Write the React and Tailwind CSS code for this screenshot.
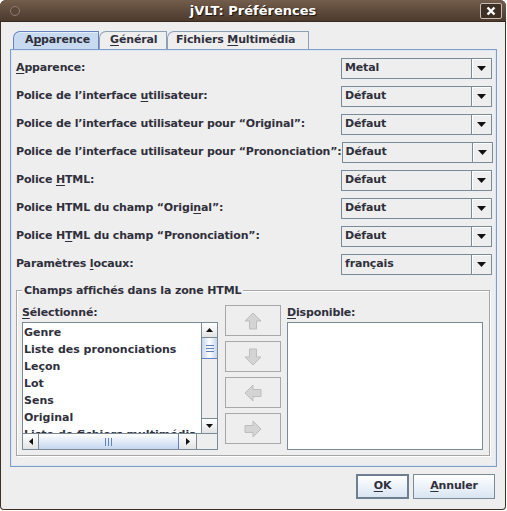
import React from 'react';

const U = ({ children }) => <span className="underline underline-offset-[2px]">{children}</span>;

const DownArrow = () => (
  <svg width="9" height="5" viewBox="0 0 9 5">
    <polygon points="0,0 9,0 4.5,5" fill="#111" />
  </svg>
);

const Combo = ({ value }) => (
  <div className="w-[151px] h-[21px] shrink-0 flex border border-[#7a8a99] bg-[#eeeeee]">
    <div className="flex-1 flex items-center pl-[3px] border-r border-[#7a8a99]">{value}</div>
    <div className="w-[19px] flex items-center justify-center shadow-[inset_1px_1px_0_#fff]">
      <DownArrow />
    </div>
  </div>
);

const rows = [
  { label: <><U>A</U>pparence:</>, value: 'Metal' },
  { label: <>Police de l’interface <U>u</U>tilisateur:</>, value: 'Défaut' },
  { label: <>Police de l’interface utilisateur pour “Original”:</>, value: 'Défaut' },
  { label: <>Police de l’interface utilisateur pour “Prononciation”:</>, value: 'Défaut' },
  { label: <>Police <U>H</U>TML:</>, value: 'Défaut' },
  { label: <>Police HTML du champ “Origi<U>n</U>al”:</>, value: 'Défaut' },
  { label: <>Police H<U>T</U>ML du champ “Prononciation”:</>, value: 'Défaut' },
  { label: <>Paramètres <U>l</U>ocaux:</>, value: 'français' },
];

const items = ['Genre', 'Liste des prononciations', 'Leçon', 'Lot', 'Sens', 'Original', 'Liste de fichiers multimédia'];

// disabled arrow buttons between the two lists
const ArrowIcon = ({ dir }) => {
  const rot = { up: 0, down: 180, left: 270, right: 90 }[dir];
  return (
    <svg width="20" height="20" viewBox="0 0 20 20" style={{ transform: `rotate(${rot}deg)` }}>
      <path d="M10 2 L18 10 L13.5 10 L13.5 18 L6.5 18 L6.5 10 L2 10 Z" fill="#d4d4d4" stroke="#bdbdbd" strokeWidth="1" strokeLinejoin="round" />
    </svg>
  );
};

const ScrollTri = ({ dir }) => {
  const pts = {
    up: '0,4 7,4 3.5,0',
    down: '0,0 7,0 3.5,4',
    left: '4,0 4,7 0,3.5',
    right: '0,0 0,7 4,3.5',
  }[dir];
  const vertical = dir === 'up' || dir === 'down';
  return (
    <svg width={vertical ? 7 : 4} height={vertical ? 4 : 7} viewBox={vertical ? '0 0 7 4' : '0 0 4 7'}>
      <polygon points={pts} fill="#111" />
    </svg>
  );
};

const Tab = ({ selected, children, className = '' }) => (
  <div
    className={
      'h-[18px] flex items-center px-[8px] border border-b-0 rounded-tl-[7px] ' +
      (selected
        ? 'bg-[#c8daf0] border-[#6382bf] shadow-[inset_0_1px_0_#e4eefa]'
        : 'bg-[#eeeeee] border-[#8da0b8]') +
      ' ' + className
    }
  >
    {children}
  </div>
);

const DialogButton = ({ children, def, className = '' }) => (
  <div
    className={
      'h-[25px] flex items-center justify-center bg-gradient-to-b from-[#ffffff] to-[#d9e5f2] ' +
      (def ? 'border-2 border-[#6e7f91]' : 'border border-[#7a8a99]') +
      ' ' + className
    }
  >
    {children}
  </div>
);

export default function App() {
  return (
    <div className="w-[507px] h-[511px] bg-white text-[11px] font-bold tracking-[-0.15px] text-[#30303c]" style={{ fontFamily: '"DejaVu Sans", sans-serif' }}>
      <div className="w-[506px] h-[510px] flex flex-col rounded-t-[6px] rounded-b-[4px] overflow-hidden bg-[#3f3026]">
        {/* title bar */}
        <div className="h-[22px] shrink-0 relative flex items-center justify-center bg-gradient-to-b from-[#735d4c] to-[#4c3a2d] border-b border-[#3a2b21]">
          <div className="absolute left-[10px] top-[6px] w-[10px] h-[10px] rounded-full border border-[#8f7d70] bg-[#5a4738]" />
          <span className="text-white text-[13px] font-bold tracking-normal [text-shadow:1px_1px_1px_#1e140e]">
            jVLT: Préférences
          </span>
          <div className="absolute right-[4px] top-[3px] w-[22px] h-[16px] rounded-[2px] border border-[#c9bcb2] bg-[#3f3026] flex items-center justify-center">
            <svg width="10" height="10" viewBox="0 0 10 10">
              <path d="M1.5 1.5 L8.5 8.5 M8.5 1.5 L1.5 8.5" stroke="#fff" strokeWidth="2.4" />
            </svg>
          </div>
        </div>

        {/* body */}
        <div className="flex-1 mx-[1px] mb-[1px] bg-[#eeeeee] rounded-b-[3px] flex flex-col pt-[9px] pl-[9px] pr-[8px]">
          {/* tabs */}
          <div className="flex pl-[3px] h-[18px]">
            <Tab selected className="w-[86px] pl-[11px]"><span>A<U>p</U>parence</span></Tab>
            <Tab className="w-[68px] pl-[10px]"><span><U>G</U>énéral</span></Tab>
            <Tab className="w-[142px] pl-[8px] border-r"><span>Fichiers <U>M</U>ultimédia</span></Tab>
          </div>

          {/* tab panel */}
          <div className="h-[418px] border border-[#7f9dc9] shadow-[inset_0_0_0_1px_#dbe6f4] flex flex-col px-[4px] pt-[8px]">
            <div className="flex flex-col gap-[7px]">
              {rows.map((r, i) => (
                <div key={i} className="flex items-center justify-between">
                  <span className="pl-[1px] whitespace-nowrap">{r.label}</span>
                  <Combo value={r.value} />
                </div>
              ))}
            </div>

            {/* group box */}
            <div className="relative mt-[15px] ml-[1px] mr-[2px] h-[166px] border border-[#a6a6a6] shadow-[inset_1px_1px_0_#fff,1px_1px_0_#fff] px-[5px] pt-[14px]">
              <span className="absolute left-[5px] top-[-8px] bg-[#eeeeee] px-[2px] leading-[15px]">
                Champs affichés dans la zone HTML
              </span>
              <div className="flex gap-[6px]">
                {/* selected list */}
                <div className="w-[196px] flex flex-col">
                  <div className="h-[17px] flex items-center"><span><U>S</U>électionné:</span></div>
                  <div className="h-[128px] border border-[#7a8a99] bg-white flex flex-col">
                    <div className="flex-1 flex min-h-0">
                      <div className="flex-1 overflow-hidden pl-[1px] pt-[1px] whitespace-nowrap tracking-normal">
                        {items.map((t) => (
                          <div key={t} className="h-[17px] leading-[17px]">{t}</div>
                        ))}
                      </div>
                      {/* vertical scrollbar */}
                      <div className="w-[16px] flex flex-col border-l border-[#7a8a99] bg-[#eeeeee]">
                        <div className="h-[15px] flex items-center justify-center border-b border-[#7a8a99] bg-gradient-to-b from-white to-[#e3e3e3]"><ScrollTri dir="up" /></div>
                        <div className="h-[21px] border-b border-[#6382bf] bg-gradient-to-r from-[#c4d6ef] via-white to-[#c4d6ef] flex flex-col items-center justify-center gap-[2px]">
                          <div className="w-[8px] h-[1px] bg-[#6382bf]" />
                          <div className="w-[8px] h-[1px] bg-[#6382bf]" />
                          <div className="w-[8px] h-[1px] bg-[#6382bf]" />
                        </div>
                        <div className="flex-1" />
                        <div className="h-[15px] flex items-center justify-center border-t border-[#7a8a99] bg-gradient-to-b from-white to-[#e3e3e3]"><ScrollTri dir="down" /></div>
                      </div>
                    </div>
                    {/* horizontal scrollbar */}
                    <div className="h-[16px] flex border-t border-[#7a8a99] bg-[#eeeeee]">
                      <div className="w-[16px] flex items-center justify-center border-r border-[#7a8a99] bg-gradient-to-b from-white to-[#e3e3e3]"><ScrollTri dir="left" /></div>
                      <div className="w-[140px] border-r border-[#6382bf] bg-gradient-to-b from-[#ffffff] to-[#c4d6ef] flex items-center justify-center gap-[2px]">
                        <div className="w-[1px] h-[8px] bg-[#6382bf]" />
                        <div className="w-[1px] h-[8px] bg-[#6382bf]" />
                        <div className="w-[1px] h-[8px] bg-[#6382bf]" />
                      </div>
                      <div className="w-[18px] flex items-center justify-center border-r border-[#7a8a99] bg-gradient-to-b from-white to-[#e3e3e3]"><ScrollTri dir="right" /></div>
                      <div className="flex-1" />
                    </div>
                  </div>
                </div>

                {/* move buttons */}
                <div className="w-[56px] ml-[1px] flex flex-col gap-[5px]">
                  {['up', 'down', 'left', 'right'].map((d) => (
                    <div key={d} className="h-[31px] border border-[#a8a8a8] bg-[#eeeeee] flex items-center justify-center">
                      <ArrowIcon dir={d} />
                    </div>
                  ))}
                </div>

                {/* available list */}
                <div className="w-[196px] flex flex-col">
                  <div className="h-[17px] flex items-center"><span><U>D</U>isponible:</span></div>
                  <div className="h-[128px] border border-[#7a8a99] bg-white" />
                </div>
              </div>
            </div>
          </div>

          {/* dialog buttons */}
          <div className="flex justify-end gap-[4px] mt-[7px] pr-[2px]">
            <DialogButton def className="w-[53px]"><span><U>O</U>K</span></DialogButton>
            <DialogButton className="w-[82px]"><span><U>A</U>nnuler</span></DialogButton>
          </div>
        </div>
      </div>
    </div>
  );
}
